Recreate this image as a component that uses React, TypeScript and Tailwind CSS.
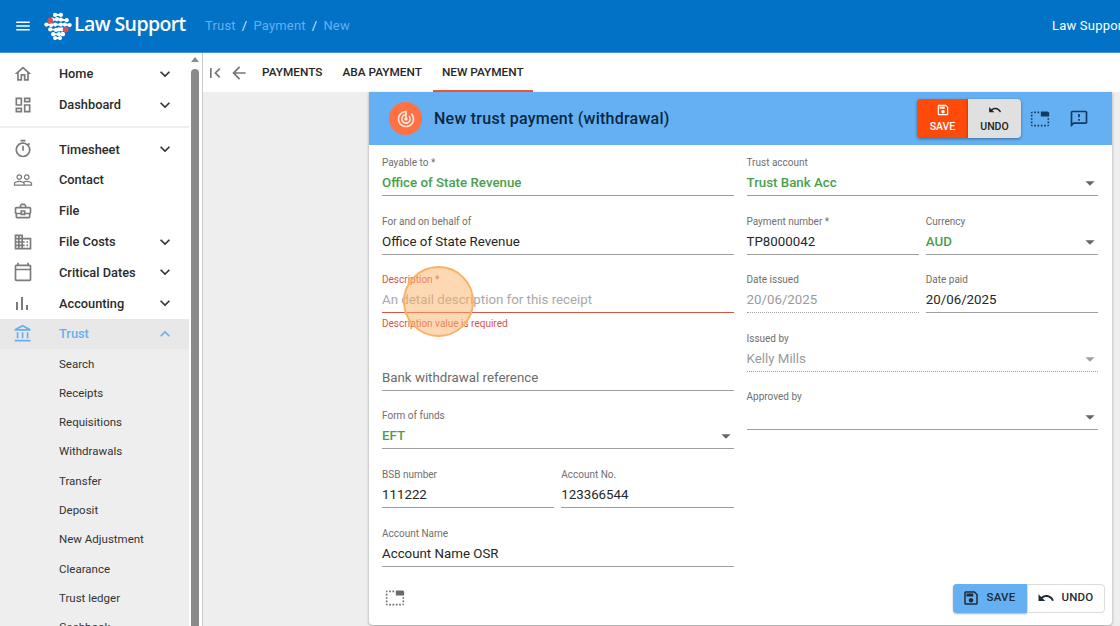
import type { ElementType, ReactNode } from 'react';
import {
  MdArrowBack,
  MdArrowDropDown,
  MdDomain,
  MdExpandLess,
  MdExpandMore,
  MdFirstPage,
  MdMenu,
  MdOutlineAccountBalance,
  MdOutlineBusinessCenter,
  MdOutlineCalendarToday,
  MdOutlineDashboard,
  MdOutlineFeedback,
  MdOutlineHome,
  MdOutlineSave,
  MdOutlineTimer,
  MdPeopleOutline,
  MdTabUnselected,
  MdTrackChanges,
  MdUndo,
} from 'react-icons/md';

function BarsIcon({ className }: { className?: string }) {
  return (
    <svg viewBox="0 0 20 20" fill="currentColor" className={className}>
      <rect x="3" y="9" width="2" height="8" />
      <rect x="8" y="4" width="2" height="13" />
      <rect x="13" y="12" width="2" height="5" />
    </svg>
  );
}

const topMenu: { icon: ElementType; label: string; more?: boolean }[] = [
  { icon: MdOutlineHome, label: 'Home', more: true },
  { icon: MdOutlineDashboard, label: 'Dashboard', more: true },
];

const mainMenu: { icon: ElementType; label: string; more?: boolean }[] = [
  { icon: MdOutlineTimer, label: 'Timesheet', more: true },
  { icon: MdPeopleOutline, label: 'Contact' },
  { icon: MdOutlineBusinessCenter, label: 'File' },
  { icon: MdDomain, label: 'File Costs', more: true },
  { icon: MdOutlineCalendarToday, label: 'Critical Dates', more: true },
  { icon: BarsIcon, label: 'Accounting', more: true },
];

const trustMenu = [
  'Search',
  'Receipts',
  'Requisitions',
  'Withdrawals',
  'Transfer',
  'Deposit',
  'New Adjustment',
  'Clearance',
  'Trust ledger',
  'Cashbook',
];

function Logo() {
  const pairs = [
    [12, 3, 18, 3],
    [9, 8, 14, 7.5],
    [18, 8, 24, 8.5],
    [3, 13, 8, 13.5],
    [12, 13, 18, 13],
    [22, 13, 27, 13.5],
    [7, 18, 13, 18.5],
    [16, 18, 19, 18],
    [10, 23, 16, 23],
    [20, 23, 20, 23],
    [12, 27, 17, 27],
  ];
  return (
    <svg width="30" height="29" viewBox="0 0 30 30" className="shrink-0">
      {pairs.map(([x1, y1, x2, y2]) => (
        <g key={`${x1}-${y1}`} fill="#fff">
          <path d={`M${x1} ${y1}L${x2} ${y2}`} stroke="#fff" strokeWidth="2" />
          <circle cx={x1} cy={y1} r="2.2" />
          <circle cx={x2} cy={y2} r="2.2" />
        </g>
      ))}
      <circle cx="7" cy="9" r="3" fill="#d8504f" />
      <circle cx="23" cy="18" r="3" fill="#d8504f" />
    </svg>
  );
}

function MenuRow({ icon: Icon, label, more }: { icon: ElementType; label: string; more?: boolean }) {
  return (
    <div className="flex h-[30.8px] items-center pl-[13px] pr-[14px]">
      <Icon className="w-5 h-5 text-[#7b7b7b] shrink-0" />
      <span className="ml-[26px] flex-1 text-[12.8px] font-medium text-[#2b2b2b]">{label}</span>
      {more && <MdExpandMore className="w-5 h-5 text-[#333]" />}
    </div>
  );
}

function Field({
  label,
  value,
  tone = 'plain',
  select,
  className = '',
}: {
  label: string;
  value?: string;
  tone?: 'plain' | 'green' | 'disabled' | 'error' | 'muted';
  select?: boolean;
  className?: string;
}) {
  const valueClass = {
    plain: 'text-[#262626]',
    green: 'text-[#4a9f4e] font-medium',
    disabled: 'text-[#9a9a9a]',
    error: 'text-[#a8a8a8]',
    muted: 'text-[#6b6b6b]',
  }[tone];
  const lineClass = {
    plain: 'border-b border-[#9e9e9e]',
    green: 'border-b border-[#9e9e9e]',
    disabled: 'border-b border-dotted border-[#9e9e9e]',
    error: 'border-b border-[#d9534a]',
    muted: 'border-b border-[#9e9e9e]',
  }[tone];
  return (
    <div className={`relative h-[44px] ${lineClass} ${className}`}>
      <div
        className={`pt-[3px] h-[19px] text-[10px] leading-[16px] ${
          tone === 'error' ? 'text-[#d9534a]' : 'text-[#6f6f6f]'
        }`}
      >
        {label}
      </div>
      <div className={`mt-[2px] h-[20px] text-[13.3px] leading-[20px] whitespace-nowrap ${valueClass}`}>{value}</div>
      {select && (
        <MdArrowDropDown
          className={`absolute right-[-3px] bottom-[1px] w-[22px] h-[22px] ${
            tone === 'disabled' ? 'text-[#a0a0a0]' : 'text-[#666]'
          }`}
        />
      )}
    </div>
  );
}

function Stack({ children }: { children: ReactNode }) {
  return <div className="flex flex-col gap-[14.6px]">{children}</div>;
}

export default function App() {
  return (
    <div className="relative h-[626px] w-[1120px] overflow-hidden bg-white font-['Roboto',sans-serif]">
      {/* Header */}
      <header className="flex h-[53px] items-center bg-[#0272c6] border-b border-[#3d96d8] pl-[14px] text-white">
        <MdMenu className="w-[18px] h-[18px] shrink-0 mr-[11px]" />
        <Logo />
        <span className="ml-[1px] -mt-[5px] w-[112px] shrink-0 whitespace-nowrap font-['Open_Sans',sans-serif] text-[19.5px] font-semibold tracking-[-0.6px]">
          Law Support
        </span>
        <nav className="ml-[19px] flex items-center text-[13px] tracking-[0.2px] text-[#64b0f2]">
          <span>Trust</span>
          <span className="mx-[6px] text-[#cfe6f8]">/</span>
          <span>Payment</span>
          <span className="mx-[6px] text-[#cfe6f8]">/</span>
          <span>New</span>
        </nav>
        <span className="ml-auto w-[68px] shrink-0 whitespace-nowrap text-[13px] tracking-[0.2px]">Law Support</span>
      </header>

      <div className="flex h-[573px]">
        {/* Sidebar */}
        <aside className="flex w-[203px] shrink-0 border-r border-[#c9c9c9]">
          <div className="w-[189px] shrink-0 overflow-hidden pt-[5.6px]">
            {topMenu.map((item) => (
              <MenuRow key={item.label} {...item} />
            ))}
            <div className="mt-[6px] mb-[5.6px] h-[2px] bg-[#eeeeee]" />
            {mainMenu.map((item) => (
              <MenuRow key={item.label} {...item} />
            ))}
            <div className="mt-[0.4px] flex h-[30px] items-center bg-[#e8e8e8] pl-[13px] pr-[14px]">
              <MdOutlineAccountBalance className="w-5 h-5 text-[#64b0f2] shrink-0" />
              <span className="ml-[26px] flex-1 text-[12.8px] font-medium text-[#64b0f2]">Trust</span>
              <MdExpandLess className="w-5 h-5 text-[#64b0f2]" />
            </div>
            <div className="bg-[#eeeeee] pt-[0.6px]">
              {trustMenu.map((label) => (
                <div key={label} className="flex h-[29.3px] items-center pl-[59px] text-[11.5px] text-[#333]">
                  {label}
                </div>
              ))}
            </div>
          </div>
          <div className="ml-[2px] w-[8px] shrink-0">
            <div className="mx-auto mt-[4px] h-0 w-0 border-x-[4px] border-b-[5px] border-x-transparent border-b-[#8a8a8a]" />
            <div className="mt-[7px] h-[560px] rounded-t-[4px] bg-[#8a8a8a]" />
          </div>
        </aside>

        {/* Main */}
        <main className="flex min-w-0 flex-1 flex-col bg-[#eeeeee]">
          <div className="flex h-[39px] shrink-0 items-center bg-white pl-[2px]">
            <MdFirstPage className="w-5 h-5 text-[#757575]" />
            <MdArrowBack className="ml-[4px] w-5 h-5 text-[#757575]" />
            <div className="ml-[13px] flex h-full items-stretch text-[11.8px] font-medium text-[#262626]">
              <span className="flex items-center pr-[20px]">PAYMENTS</span>
              <span className="flex items-center pr-[11px]">ABA PAYMENT</span>
              <span className="flex items-center border-b-2 border-[#f0583a] px-[9px] pt-[2px]">NEW PAYMENT</span>
            </div>
          </div>

          <section className="ml-[166px] mr-[8px] flex h-[533px] flex-col rounded-b-[4px] bg-white shadow-[0_1px_3px_rgba(0,0,0,0.35)]">
            <div className="flex h-[53px] shrink-0 items-center bg-[#64b0f2] pl-[20px] pr-[23px]">
              <div className="flex h-[33px] w-[33px] items-center justify-center rounded-full bg-[#ff7043]">
                <MdTrackChanges className="w-5 h-5 text-[#ffe3d8]" />
              </div>
              <h1 className="ml-[12px] text-[16px] font-medium tracking-[0.25px] text-[#0c2743]">
                New trust payment (withdrawal)
              </h1>
              <div className="ml-auto flex items-center">
                <button className="flex h-[39px] w-[51px] flex-col items-center justify-center rounded-l-[4px] bg-[#ff4a0a] text-[10.5px] font-medium text-white shadow-[0_1px_3px_rgba(0,0,0,0.4)]">
                  <MdOutlineSave className="w-[14px] h-[14px]" />
                  <span className="mt-[2px]">SAVE</span>
                </button>
                <button className="flex h-[39px] w-[53px] flex-col items-center justify-center rounded-r-[4px] bg-[#e0e0e0] text-[10.5px] font-medium text-[#222] shadow-[0_1px_3px_rgba(0,0,0,0.4)]">
                  <MdUndo className="w-[14px] h-[14px]" />
                  <span className="mt-[2px]">UNDO</span>
                </button>
                <MdTabUnselected className="ml-[9px] w-[20px] h-[20px] text-[#123a63]" />
                <MdOutlineFeedback className="ml-[19px] w-[20px] h-[20px] text-[#123a63]" />
              </div>
            </div>

            <div className="grid grid-cols-2 gap-x-[13px] pl-[13px] pr-[14px] pt-[7px]">
              <Stack>
                <Field label="Payable to *" value="Office of State Revenue" tone="green" />
                <Field label="For and on behalf of" value="Office of State Revenue" />
                <div>
                  <Field label="Description *" value="An detail description for this receipt" tone="error" />
                  <div className="h-[19px] pt-[3px] text-[10px] leading-[16px] text-[#d9534a]">
                    Description value is required
                  </div>
                </div>
                <Field label="" value="Bank withdrawal reference" tone="muted" />
                <Field label="Form of funds" value="EFT" tone="green" select />
                <div className="grid grid-cols-2 gap-x-[7px]">
                  <Field label="BSB number" value="111222" />
                  <Field label="Account No." value="123366544" />
                </div>
                <Field label="Account Name" value="Account Name OSR" />
              </Stack>
              <Stack>
                <Field label="Trust account" value="Trust Bank Acc" tone="green" select />
                <div className="grid grid-cols-2 gap-x-[7px]">
                  <Field label="Payment number *" value="TP8000042" />
                  <Field label="Currency" value="AUD" tone="green" select />
                </div>
                <div className="grid grid-cols-2 gap-x-[7px]">
                  <Field label="Date issued" value="20/06/2025" tone="disabled" />
                  <Field label="Date paid" value="20/06/2025" />
                </div>
                <Field label="Issued by" value="Kelly Mills" tone="disabled" select />
                <Field label="Approved by" select />
              </Stack>
            </div>

            <div className="mt-[17px] flex items-center pl-[16px] pr-[7px]">
              <MdTabUnselected className="w-[20px] h-[20px] text-[#6b6b6b]" />
              <div className="ml-auto flex text-[11.5px] font-medium tracking-[0.2px] text-[#1f2b36]">
                <button className="flex h-[29px] w-[74px] items-center justify-center gap-[7px] rounded-l-[4px] bg-[#64b0f2] pr-[3px] shadow-[0_1px_2px_rgba(0,0,0,0.3)]">
                  <MdOutlineSave className="w-[18px] h-[18px]" />
                  SAVE
                </button>
                <button className="flex h-[29px] w-[78px] items-center justify-center gap-[7px] rounded-r-[4px] border border-[#dcdcdc] bg-white pr-[2px]">
                  <MdUndo className="w-[18px] h-[18px]" />
                  UNDO
                </button>
              </div>
            </div>
          </section>
        </main>
      </div>

      {/* Click highlight */}
      <div className="absolute left-[403px] top-[266px] h-[71px] w-[71px] rounded-full border-2 border-[#fbb268] bg-[#fbb268]/50" />
    </div>
  );
}
